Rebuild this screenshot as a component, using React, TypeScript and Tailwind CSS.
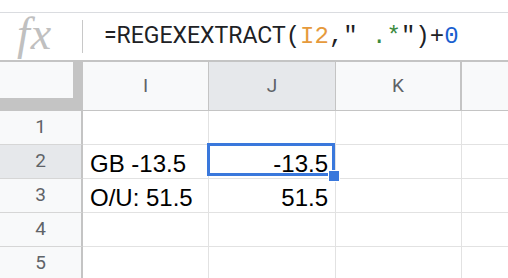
import React from "react";

const sans = { fontFamily: '"Liberation Sans", Arial, sans-serif' };
const roboto = { fontFamily: 'Roboto, "Liberation Sans", sans-serif' };
const mono = { fontFamily: '"Liberation Mono", "DejaVu Sans Mono", monospace' };

function Row({ n, selected, i, j }: { n: number; selected?: boolean; i?: string; j?: string }) {
  return (
    <div className="flex h-[34px] shrink-0">
      <div
        className={`w-[83px] shrink-0 border-r-2 border-b border-r-[#c4c4c4] border-b-[#d6d6d6] flex items-center justify-center text-[19px] text-[#5f6368] ${
          selected ? "bg-[#e6e8eb]" : "bg-[#f8f9fa]"
        }`}
        style={roboto}
      >
        {n}
      </div>
      <div
        className="w-[126px] shrink-0 border-r border-b border-[#e2e2e2] flex items-end pl-[7px] pb-[2px] text-[24px] leading-[24px] text-black whitespace-nowrap"
        style={sans}
      >
        {i}
      </div>
      <div
        className="w-[127px] shrink-0 border-r border-b border-[#e2e2e2] flex items-end justify-end pr-[7px] pb-[2px] text-[24px] leading-[24px] text-black whitespace-nowrap"
        style={sans}
      >
        {j}
      </div>
      <div className="w-[126px] shrink-0 border-r border-b border-[#e2e2e2]" />
      <div className="flex-1 border-b border-[#e2e2e2]" />
    </div>
  );
}

export default function App() {
  return (
    <div className="w-[508px] h-[278px] bg-white overflow-hidden relative flex flex-col">
      <div className="h-[12px] shrink-0" />
      {/* formula bar */}
      <div className="h-[50px] shrink-0 border-t border-[#dadce0] border-b-2 border-b-[#c4c4c4] flex items-center">
        <div className="w-[82px] shrink-0 flex items-center pl-[17px] h-full">
          <span
            className="italic text-[46px] leading-none text-[#c0c0c0] -mt-[6px] tracking-[1px]"
            style={{ fontFamily: '"Liberation Serif", "DejaVu Serif", serif' }}
          >
            fx
          </span>
        </div>
        <div className="w-px h-[33px] bg-[#c8c8c8] shrink-0" />
        <div className="pl-[21px] flex items-center whitespace-nowrap text-[#202124]">
          <span className="text-[23px]" style={roboto}>
            =REGEXEXTRACT
          </span>
          <span className="text-[24px]" style={mono}>
            (<span className="text-[#e69a3c]">I2</span>,"<span className="text-[#3b8a3e]"> .*</span>")+<span className="text-[#1a5fd0]">0</span>
          </span>
        </div>
      </div>
      {/* column headers */}
      <div className="flex h-[49px] shrink-0 border-b border-[#c4c4c4]">
        <div className="w-[83px] shrink-0 bg-[#c4c4c4] flex flex-col">
          <div className="w-[73px] h-[36px] bg-[#f8f9fa]" />
        </div>
        <div
          className="w-[126px] shrink-0 bg-[#f8f9fa] border-r border-[#c4c4c4] flex items-center justify-center text-[19px] text-[#5f6368]"
          style={roboto}
        >
          I
        </div>
        <div
          className="w-[127px] shrink-0 bg-[#e6e8eb] border-r border-[#c4c4c4] flex items-center justify-center text-[19px] text-[#5f6368]"
          style={roboto}
        >
          J
        </div>
        <div
          className="w-[126px] shrink-0 bg-[#f8f9fa] border-r-2 border-[#c4c4c4] flex items-center justify-center text-[19px] text-[#5f6368]"
          style={roboto}
        >
          K
        </div>
        <div className="flex-1 bg-[#f8f9fa]" />
      </div>
      <Row n={1} />
      <Row n={2} selected i="GB -13.5" j="-13.5" />
      <Row n={3} i="O/U: 51.5" j="51.5" />
      <Row n={4} />
      <Row n={5} />
      {/* selection */}
      <div className="absolute left-[207px] top-[143px] w-[128px] h-[33px] border-[3px] border-[#3a78dc]" />
      <div className="absolute left-[328px] top-[170px] w-[12px] h-[12px] bg-[#3a78dc] border border-white" />
    </div>
  );
}
